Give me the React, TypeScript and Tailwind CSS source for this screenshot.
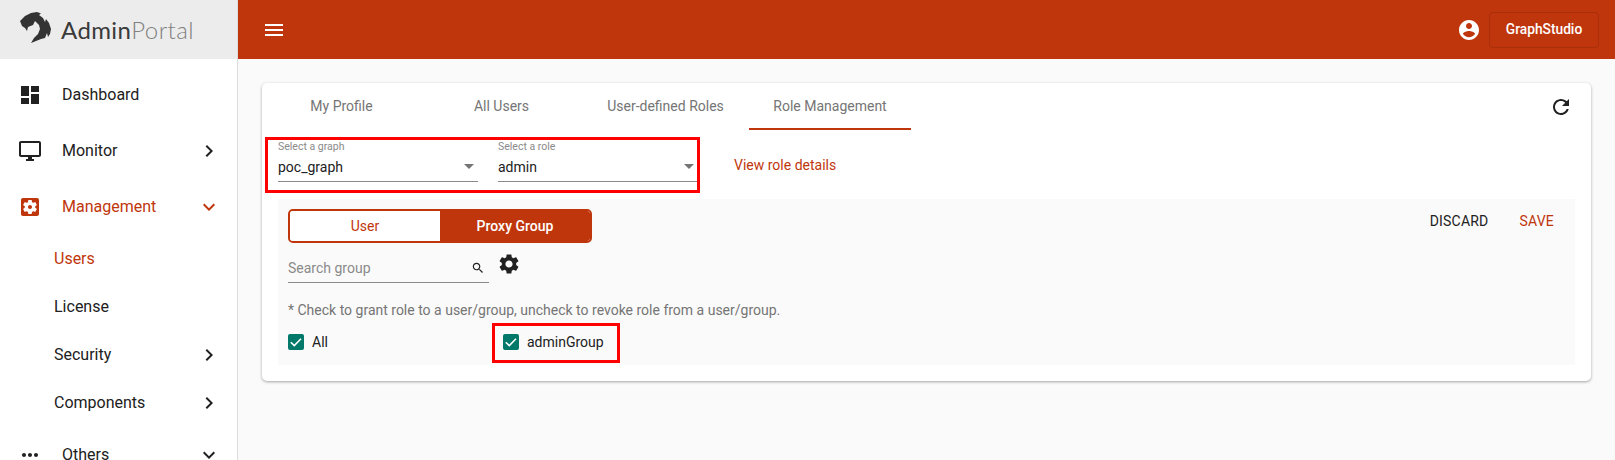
import type { ReactNode } from "react";

function Icon({ d, className }: { d: string; className?: string }) {
  return (
    <svg viewBox="0 0 24 24" fill="currentColor" className={className}>
      <path d={d} />
    </svg>
  );
}

const ICONS = {
  dashboard: "M3 13h8V3H3v10zm0 8h8v-6H3v6zm10 0h8V11h-8v10zm0-18v6h8V3h-8z",
  desktop:
    "M21 2H3c-1.1 0-2 .9-2 2v12c0 1.1.9 2 2 2h7v2H8v2h8v-2h-2v-2h7c1.1 0 2-.9 2-2V4c0-1.1-.9-2-2-2zm0 14H3V4h18v12z",
  settingsApp:
    "M12 10c-1.1 0-2 .9-2 2s.9 2 2 2 2-.9 2-2-.9-2-2-2zm7-7H5c-1.11 0-2 .9-2 2v14c0 1.1.89 2 2 2h14c1.11 0 2-.9 2-2V5c0-1.1-.89-2-2-2zm-1.75 9c0 .23-.02.46-.05.68l1.48 1.16c.13.11.17.3.08.45l-1.4 2.42c-.09.15-.27.21-.43.15l-1.74-.7c-.36.28-.76.51-1.18.69l-.26 1.85c-.03.17-.18.3-.35.3h-2.8c-.17 0-.32-.13-.35-.29l-.26-1.85c-.43-.18-.82-.41-1.18-.69l-1.74.7c-.16.06-.34 0-.43-.15l-1.4-2.42c-.09-.15-.05-.34.08-.45l1.48-1.16c-.03-.23-.05-.46-.05-.69 0-.23.02-.46.05-.68l-1.48-1.16c-.13-.11-.17-.3-.08-.45l1.4-2.42c.09-.15.27-.21.43-.15l1.74.7c.36-.28.76-.51 1.18-.69l.26-1.85c.03-.17.18-.3.35-.3h2.8c.17 0 .32.13.35.29l.26 1.85c.43.18.82.41 1.18.69l1.74-.7c.16-.06.34 0 .43.15l1.4 2.42c.09.15.05.34-.08.45l-1.48 1.16c.03.23.05.46.05.69z",
  more:
    "M6 10c-1.1 0-2 .9-2 2s.9 2 2 2 2-.9 2-2-.9-2-2-2zm12 0c-1.1 0-2 .9-2 2s.9 2 2 2 2-.9 2-2-.9-2-2-2zm-6 0c-1.1 0-2 .9-2 2s.9 2 2 2 2-.9 2-2-.9-2-2-2z",
  account:
    "M12 2C6.48 2 2 6.48 2 12s4.48 10 10 10 10-4.48 10-10S17.52 2 12 2zm0 3c1.66 0 3 1.34 3 3s-1.34 3-3 3-3-1.34-3-3 1.34-3 3-3zm0 14.2c-2.5 0-4.71-1.28-6-3.22.03-1.99 4-3.08 6-3.08 1.99 0 5.97 1.09 6 3.08-1.29 1.94-3.5 3.22-6 3.22z",
  refresh:
    "M17.65 6.35C16.2 4.9 14.21 4 12 4c-4.42 0-7.99 3.58-7.99 8s3.57 8 7.99 8c3.73 0 6.84-2.55 7.73-6h-2.08c-.82 2.33-3.04 4-5.65 4-3.31 0-6-2.69-6-6s2.69-6 6-6c1.66 0 3.14.69 4.22 1.78L13 11h7V4l-2.35 2.35z",
  settings:
    "M19.14 12.94c.04-.3.06-.61.06-.94 0-.32-.02-.64-.07-.94l2.03-1.58c.18-.14.23-.41.12-.61l-1.92-3.32c-.12-.22-.37-.29-.59-.22l-2.39.96c-.5-.38-1.03-.7-1.62-.94l-.36-2.54c-.04-.24-.24-.41-.48-.41h-3.84c-.24 0-.43.17-.47.41l-.36 2.54c-.59.24-1.13.57-1.62.94l-2.39-.96c-.22-.08-.47 0-.59.22L2.74 8.87c-.12.21-.08.47.12.61l2.03 1.58c-.05.3-.09.63-.09.94s.02.64.07.94l-2.03 1.58c-.18.14-.23.41-.12.61l1.92 3.32c.12.22.37.29.59.22l2.39-.96c.5.38 1.03.7 1.62.94l.36 2.54c.05.24.24.41.48.41h3.84c.24 0 .44-.17.47-.41l.36-2.54c.59-.24 1.13-.56 1.62-.94l2.39.96c.22.08.47 0 .59-.22l1.92-3.32c.12-.22.07-.47-.12-.61l-2.01-1.58zM12 15.6c-1.98 0-3.6-1.62-3.6-3.6s1.62-3.6 3.6-3.6 3.6 1.62 3.6 3.6-1.62 3.6-3.6 3.6z",
  search:
    "M15.5 14h-.79l-.28-.27C15.41 12.59 16 11.11 16 9.5 16 5.91 13.09 3 9.5 3S3 5.91 3 9.5 5.91 16 9.5 16c1.61 0 3.09-.59 4.23-1.57l.27.28v.79l5 4.99L20.49 19l-4.99-5zm-6 0C7.01 14 5 11.99 5 9.5S7.01 5 9.5 5 14 7.01 14 9.5 11.99 14 9.5 14z",
  chevronRight: "M10 6L8.59 7.41 13.17 12l-4.58 4.59L10 18l6-6z",
  expand: "M16.59 8.59L12 13.17 7.41 8.59 6 10l6 6 6-6z",
  menu: "M3 18h18v-2H3v2zm0-5h18v-2H3v2zm0-7v2h18V6H3z",
};

function NavItem({
  icon,
  label,
  arrow,
  active,
}: {
  icon: string;
  label: string;
  arrow?: "right" | "down";
  active?: boolean;
}) {
  return (
    <div className={`flex h-14 shrink-0 items-center pl-[18px] pr-[16px] ${active ? "text-[#bf360c]" : "text-[#212121]"}`}>
      <Icon d={icon} className="h-6 w-6 shrink-0" />
      <span className="ml-5 flex-1 text-base">{label}</span>
      {arrow === "right" && <Icon d={ICONS.chevronRight} className="h-6 w-6 text-[#212121]" />}
      {arrow === "down" && <Icon d={ICONS.expand} className="h-6 w-6" />}
    </div>
  );
}

function SubItem({ label, arrow, active }: { label: string; arrow?: boolean; active?: boolean }) {
  return (
    <div className={`flex h-12 shrink-0 items-center pl-[54px] pr-[16px] ${active ? "text-[#bf360c]" : "text-[#212121]"}`}>
      <span className="flex-1 text-base">{label}</span>
      {arrow && <Icon d={ICONS.chevronRight} className="h-6 w-6" />}
    </div>
  );
}

function Logo() {
  return (
    <div className="flex h-[59px] shrink-0 items-center bg-[#ececec] pl-4">
      <svg viewBox="0 0 40 38" className="mb-[5px] h-[38px] w-10 shrink-0" fill="#333333">
        <path d="M4 13 9 8l6-3 6-1 4 1.500L23 7l4 3 2 4 1-3 3 4 2 6-1 5-2 3-1-4-2 5-4 1-5 2-5 2 3-5 4-4 2-5-1-4-4-4-2 4-5 2-1 4-2-3-3-2z" />
      </svg>
      <span className="ml-[5px] font-['Lato',sans-serif] text-[24px] leading-none tracking-[0.4px]">
        <span className="font-normal text-[#3a3a3a]">Admin</span>
        <span className="font-light text-[#808080]">Portal</span>
      </span>
    </div>
  );
}

function Select({ label, value }: { label: string; value: string }) {
  return (
    <div className="relative h-[42px] w-[200px] border-b border-[#8a8a8a]">
      <div className="text-[10.5px] leading-[14px] text-[#8a8a8a]">{label}</div>
      <div className="mt-[3px] text-sm leading-5 text-[#212121]">{value}</div>
      <div className="absolute right-[4px] top-[24px] h-0 w-0 border-x-[5px] border-t-[5px] border-x-transparent border-t-[#757575]" />
    </div>
  );
}

function Check({ label, width }: { label: ReactNode; width: string }) {
  return (
    <div className={`flex items-center ${width}`}>
      <div className="flex h-4 w-4 items-center justify-center rounded-[2px] bg-[#00796b]">
        <svg viewBox="0 0 16 16" className="h-4 w-4" fill="none" stroke="white" strokeWidth="1.6">
          <path d="M2.800 8.200 6.300 11.600 13 4.800" />
        </svg>
      </div>
      <span className="ml-2 text-[14px] leading-5 text-[#212121]">{label}</span>
    </div>
  );
}

const TABS = [
  { label: "My Profile", width: "w-[159px]" },
  { label: "All Users", width: "w-[161px]" },
  { label: "User-defined Roles", width: "w-[167px]" },
  { label: "Role Management", width: "w-[162px]" },
];

export default function App() {
  return (
    <div className="flex h-[460px] w-[1615px] overflow-hidden bg-[#fafafa] font-['Roboto',sans-serif]">
      {/* Sidebar */}
      <aside className="flex h-[460px] w-[238px] shrink-0 flex-col overflow-hidden border-r border-[#dcdcdc] bg-white">
        <Logo />
        <div className="h-2 shrink-0" />
        <NavItem icon={ICONS.dashboard} label="Dashboard" />
        <NavItem icon={ICONS.desktop} label="Monitor" arrow="right" />
        <NavItem icon={ICONS.settingsApp} label="Management" arrow="down" active />
        <SubItem label="Users" active />
        <SubItem label="License" />
        <SubItem label="Security" arrow />
        <SubItem label="Components" arrow />
        <NavItem icon={ICONS.more} label="Others" arrow="down" />
      </aside>

      <div className="flex min-w-0 flex-1 flex-col">
        {/* Header */}
        <header className="flex h-[59px] shrink-0 items-center bg-[#bf360c] pl-6 pr-4 text-white">
          <Icon d={ICONS.menu} className="h-6 w-6" />
          <div className="flex-1" />
          <Icon d={ICONS.account} className="h-6 w-6" />
          <button className="ml-2 h-9 w-[110px] rounded-[4px] border border-[#a92f0a] text-[13.75px] font-medium">
            GraphStudio
          </button>
        </header>

        {/* Card */}
        <main className="px-6 pt-6">
          <div className="relative h-[298px] w-[1329px] rounded-[5px] bg-white shadow-[0_1px_3px_rgba(0,0,0,0.35)]">
            <div className="flex h-[47px]">
              {TABS.map((tab, i) => (
                <div
                  key={tab.label}
                  className={`flex h-[47px] items-center justify-center border-b-2 text-sm text-[#757575] ${tab.width} ${i === 3 ? "border-[#bf360c]" : "border-transparent"}`}
                >
                  {tab.label}
                </div>
              ))}
              <div className="flex-1" />
              <Icon d={ICONS.refresh} className="mr-[18px] mt-3 h-6 w-6 text-[#212121]" />
            </div>

            <div className="mt-[10px] flex items-start pl-4">
              <Select label="Select a graph" value="poc_graph" />
              <div className="w-5" />
              <Select label="Select a role" value="admin" />
              <a className="ml-9 mt-[15px] text-sm leading-5 text-[#bf360c]">View role details</a>
            </div>

            <div className="mx-4 mt-[17px] h-[166px] bg-[#fafafa] pl-[10px] pr-[21px] pt-[10px]">
              <div className="flex items-start justify-between">
                <div className="flex h-[34px] w-[304px] overflow-hidden rounded-[5px] border-2 border-[#bf360c] text-sm">
                  <div className="flex w-[150px] items-center justify-center bg-white text-[#bf360c]">User</div>
                  <div className="flex flex-1 items-center justify-center bg-[#bf360c] font-medium text-white">Proxy Group</div>
                </div>
                <div className="flex gap-[31px] pt-[2px] text-sm tracking-[0.2px]">
                  <span className="text-[#212121]">DISCARD</span>
                  <span className="text-[#bf360c]">SAVE</span>
                </div>
              </div>

              <div className="mt-[10px] flex items-start">
                <div className="flex h-[30px] w-[201px] items-center border-b border-[#8a8a8a]">
                  <span className="flex-1 text-sm text-[#8a8a8a]">Search group</span>
                  <Icon d={ICONS.search} className="mr-1 h-[14px] w-[14px] text-[#212121]" />
                </div>
                <Icon d={ICONS.settings} className="ml-2 mt-[-1px] h-6 w-6 text-[#212121]" />
              </div>

              <div className="mt-[17px] text-sm leading-5 text-[#757575]">
                * Check to grant role to a user/group, uncheck to revoke role from a user/group.
              </div>

              <div className="mt-3 flex">
                <Check label="All" width="w-[215px]" />
                <Check label="adminGroup" width="w-[215px]" />
              </div>
            </div>

            {/* Annotation boxes */}
            <div className="absolute left-[3px] top-[54px] h-[56px] w-[435px] border-[3px] border-[#ff0000]" />
            <div className="absolute left-[230px] top-[240px] h-[40px] w-[128px] border-[3px] border-[#ff0000]" />
          </div>
        </main>
      </div>
    </div>
  );
}
